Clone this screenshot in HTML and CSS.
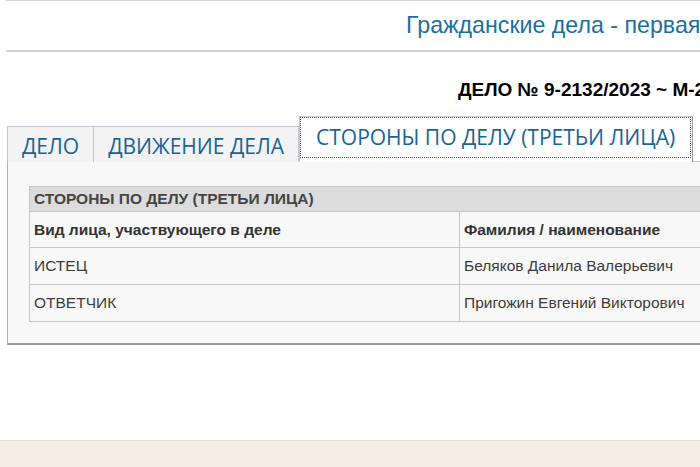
FILE: index.html
```html
<!DOCTYPE html>
<html lang="ru">
<head>
<meta charset="utf-8">
<title>Гражданские дела</title>
<link rel="stylesheet" href="styles.css">
</head>
<body>
<div class="page">
  <header class="head">
    <h1 class="title">Гражданские дела - первая</h1>
  </header>
  <h2 class="case-no">ДЕЛО № 9-2132/2023 ~ М-23</h2>
  <div class="tabs">
    <ul class="tab-nav">
      <li class="tab"><a>ДЕЛО</a></li>
      <li class="tab"><a>ДВИЖЕНИЕ ДЕЛА</a></li>
      <li class="tab active"><a>СТОРОНЫ ПО ДЕЛУ (ТРЕТЬИ ЛИЦА)</a></li>
    </ul>
    <div class="panel">
      <table class="parties">
        <tr class="cap"><th colspan="2">СТОРОНЫ ПО ДЕЛУ (ТРЕТЬИ ЛИЦА)</th></tr>
        <tr class="colhead"><td class="c1">Вид лица, участвующего в деле</td><td>Фамилия / наименование</td></tr>
        <tr><td class="c1">ИСТЕЦ</td><td>Беляков Данила Валерьевич</td></tr>
        <tr><td class="c1">ОТВЕТЧИК</td><td>Пригожин Евгений Викторович</td></tr>
      </table>
    </div>
  </div>
</div>
<footer class="foot"></footer>
</body>
</html>
```
FILE: styles.css
```css
html, body {
  margin: 0;
  padding: 0;
  background: #fff;
  overflow: hidden;
}
body {
  font-family: "Liberation Sans", Arial, sans-serif;
  width: 700px;
  height: 467px;
  position: relative;
}
.page {
  margin-left: 6px;
  width: 1200px;
  border-top: 1px solid #d4d4d4;
}
.head {
  height: 49px;
  border-bottom: 2px solid #d4d4d4;
}
.title {
  margin: 0;
  padding: 10px 0 0 400px;
  font-weight: normal;
  font-size: 23.2px;
  line-height: 28px;
  color: #1b6fa0;
  white-space: nowrap;
}
.case-no {
  margin: 27px 0 0 452px;
  font-size: 19px;
  line-height: 22px;
  font-weight: bold;
  color: #000;
  white-space: nowrap;
}
.tabs {
  margin: 15px 0 0 1px;
}
.tab-nav {
  list-style: none;
  margin: 0;
  padding: 0;
  display: flex;
  align-items: flex-end;
  position: relative;
  z-index: 1;
  margin-bottom: -1px;
}
.tab {
  font-family: "Open Sans", sans-serif;
  font-size: 21px;
  color: #17649a;
  background: #f3f3f3;
  border: 1px solid #c2c8d2;
  border-bottom: 0;
  height: 36px;
  box-sizing: border-box;
  margin-right: -1px;
}
.tab a {
  display: block;
  padding: 0 14px;
  line-height: 39px;
  white-space: nowrap;
}
.tab.active {
  background: #fff;
  height: 46px;
  margin-left: 1px;
  border-color: #c9c9c9;
  border-right: 1px solid #999;
  padding: 0 1px 4px 0;
}
.tab.active a {
  padding: 1px 16px 0 16px;
  line-height: 38px;
  outline: 1px dotted #2a5d86;
  outline-offset: -1px;
  height: 41px;
  box-sizing: border-box;
}
.panel {
  width: 1100px;
  background: #f8f8f8;
  border: 1px solid #c4c4c4;
  border-left-color: #b0b0b0;
  border-bottom: 2px solid #9a9a9a;
  padding: 24px 0 21px 21px;
}
.parties {
  border-collapse: collapse;
  width: 900px;
  font-size: 15.5px;
  color: #3c3c3c;
}
.parties th,
.parties td {
  border: 1px solid #c6c6c6;
  text-align: left;
  padding: 0 4px;
  background: #f8f8f8;
}
.parties .cap th {
  background: #dcdcdc;
  color: #444;
  height: 24px;
  font-weight: bold;
}
.parties .colhead td {
  font-weight: bold;
  height: 35px;
  color: #333;
}
.parties td {
  height: 36px;
}
.parties .c1 {
  width: 421px;
}
.foot {
  position: absolute;
  left: 0;
  right: 0;
  top: 440px;
  height: 27px;
  background: #f5ede4;
  border-top: 1px solid #e6dbcf;
}
```
